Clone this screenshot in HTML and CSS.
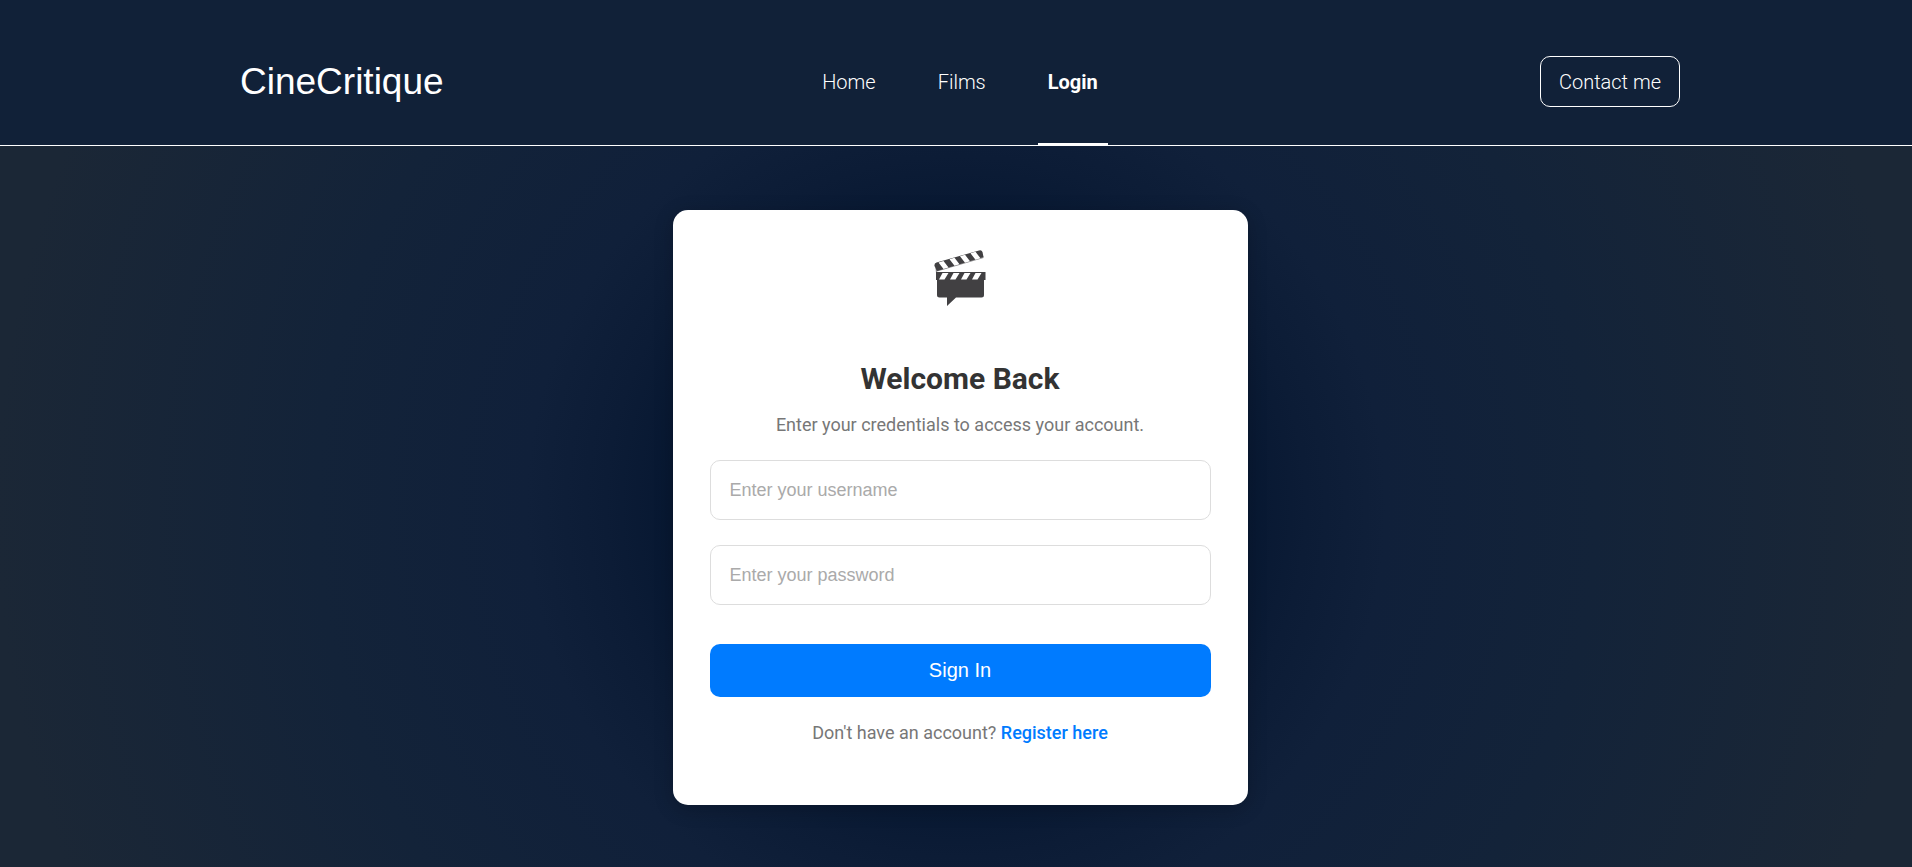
FILE: index.html
```html
<!DOCTYPE html>
<html lang="en">
<head>
<meta charset="utf-8">
<meta name="viewport" content="width=device-width, initial-scale=1">
<title>CineCritique – Login</title>
<link rel="stylesheet" href="styles.css">
</head>
<body>
<header class="site-header">
  <div class="header-inner">
    <a class="brand" href="#">CineCritique</a>
    <nav class="nav" aria-label="Main">
      <a class="nav-link" href="#">Home</a>
      <a class="nav-link" href="#">Films</a>
      <a class="nav-link active" href="#" aria-current="page">Login</a>
    </nav>
    <div class="header-action"><a class="contact" href="#">Contact me</a></div>
  </div>
</header>
<main class="page">
  <form class="card">
    <svg class="logo" viewBox="0 0 100 80" aria-hidden="true">
      <g fill="#414042">
        <path d="M24.500 31Q24 28.500 26.500 27.500L69 15.500Q71.500 14.500 72.500 17L73.500 22L27 36Z"/>
        <path d="M25.500 33L73.500 21.500V23L27 36.500V38H26Z" opacity=".6"/>
        <path d="M26 37H75.500V45H74V60Q74 62.500 71.500 62.500H46L37 71V62.500H29.500Q27 62.500 27 60V45H26Z"/>
      </g>
      <g fill="#fff">
        <path d="M28.500 27.500l5-1.500 5 6.500-5 1.500zM39.500 24.300l5-1.500 5 6.500-5 1.500zM50 21.300l5-1.500 5 6.500-5 1.500zM60.500 18.300l5-1.500 5 6.500-5 1.500z"/>
        <path d="M32.500 38h6l-4 6.500h-5.500zM43.500 38h6l-4 6.500h-5.500zM54.500 38h6l-4 6.500h-5.500zM65.500 38h6l-4 6.500h-5.500z"/>
      </g>
    </svg>
    <h1 class="title">Welcome Back</h1>
    <p class="subtitle">Enter your credentials to access your account.</p>
    <input class="field" type="text" aria-label="Username" placeholder="Enter your username">
    <input class="field" type="password" aria-label="Password" placeholder="Enter your password">
    <button class="submit" type="submit">Sign In</button>
    <p class="register">Don't have an account? <a class="register-link" href="#">Register here</a></p>
  </form>
</main>
</body>
</html>
```
FILE: styles.css
```css
* {
  box-sizing: border-box;
}

body {
  display: flex;
  flex-direction: column;
  min-height: 100vh;
  margin: 0;
  background: #112138;
  font-family: Roboto, sans-serif;
}

a {
  text-decoration: none;
}

.site-header {
  padding-left: 8px;
  border-bottom: 1px solid #fff;
  background: #112138;
}

.header-inner {
  display: grid;
  grid-template-columns: 1fr auto 1fr;
  align-items: center;
  width: 100%;
  max-width: 1440px;
  margin: 0 auto;
  padding-top: 18px;
}

.brand {
  color: #fff;
  font-family: "Liberation Sans", Arial, sans-serif;
  font-size: 37px;
}

.nav {
  display: flex;
  gap: 42px;
}

.nav-link {
  padding: 4px 10px 0;
  border-bottom: 2px solid transparent;
  color: #fff;
  font-size: 20px;
  font-weight: 300;
  line-height: 121px;
}

.nav-link.active {
  border-color: #fff;
  font-weight: 700;
}

.header-action {
  display: flex;
  justify-content: flex-end;
}

.contact {
  padding: 13px 18px 11px;
  border: 1px solid #fff;
  border-radius: 10px;
  color: #fff;
  font-size: 20px;
  font-weight: 300;
  line-height: 25px;
}

.page {
  display: flex;
  flex: 1;
  justify-content: center;
  align-items: flex-start;
  padding: 64px 0 62px 8px;
  background: radial-gradient(circle, #04152f 240px, #0c1c36 350px, #10203a 430px, #132339 640px, #1b2736 960px);
}

.card {
  display: flex;
  flex-direction: column;
  width: 100%;
  max-width: 575px;
  padding: 25px 37px 59px;
  border-radius: 15px;
  background: #fff;
  box-shadow: 0 4px 20px rgba(0, 0, 0, 0.2);
  text-align: center;
}

.logo {
  align-self: center;
  width: 100px;
  height: 80px;
}

.title {
  margin: 44px 0 0;
  color: #333;
  font-size: 30px;
  font-weight: 700;
  line-height: 40px;
}

.subtitle {
  margin: 13px 0 22px;
  color: #777;
  font-size: 18px;
  line-height: 26px;
}

.field {
  width: 100%;
  height: 60px;
  margin-bottom: 25px;
  padding: 0 19px;
  border: 1px solid #ddd;
  border-radius: 10px;
  font-family: "Liberation Sans", Arial, sans-serif;
  font-size: 18px;
}

.field::placeholder {
  color: #aaa;
}

.submit {
  height: 53px;
  margin-top: 14px;
  border: 0;
  border-radius: 10px;
  background: #007bff;
  color: #fff;
  font-family: "Liberation Sans", Arial, sans-serif;
  font-size: 20px;
}

.register {
  margin: 23px 0 0;
  color: #777;
  font-size: 18px;
  line-height: 26px;
}

.register-link {
  color: #007bff;
  font-weight: 500;
}
```
